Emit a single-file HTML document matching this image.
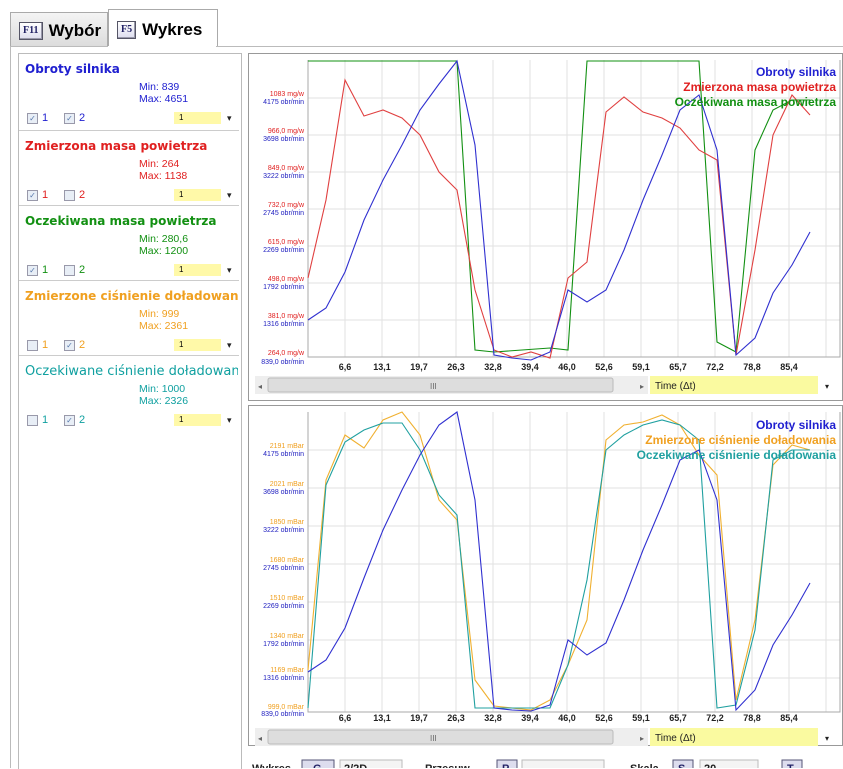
<!DOCTYPE html>
<html><head><meta charset="utf-8"><style>
body{margin:0;width:843px;height:768px;overflow:hidden;background:#fff;font-family:"Liberation Sans",Arial,sans-serif;position:relative}
.abs{position:absolute}
.tab{position:absolute;top:9px;height:36px;border:1px solid #aaa;border-bottom:none;background:linear-gradient(#f4f4f4,#dcdcdc);font-weight:bold;font-size:17px;white-space:nowrap;line-height:36px}
.key{display:inline-block;border:1px solid #556;background:linear-gradient(#fff,#dde);color:#226;font-size:10px;line-height:12px;font-family:"Liberation Serif",serif;padding:2px 3px;margin:0 6px 0 8px;vertical-align:middle;box-shadow:inset -1px -1px 0 #99a}
.item{position:absolute;left:19px;width:220px;border-bottom:1px solid #ccc;font-size:11px}
.item .t{position:absolute;left:6px;top:8px;font-weight:bold;font-size:12px;font-family:"DejaVu Sans",sans-serif;white-space:nowrap;overflow:hidden;width:213px}
.item .mm{position:absolute;left:120px;top:27px;line-height:12px;font-size:10.5px}
.cb{position:absolute;top:59px;width:9px;height:9px;border:1px solid #99a;background:#e8eef6;font-size:8px;line-height:9px;text-align:center;color:#57a}
.lab{position:absolute;top:58px;font-size:11px}
.sel{position:absolute;left:155px;top:58px;width:42px;height:12px;background:#fff9a8;font-size:8px;line-height:12px;padding-left:5px}
.sel:after{content:"▾";position:absolute;left:53px;top:0;color:#222;font-size:9px}
</style></head><body>
<div class="tab" style="left:10px;width:96px;top:12px;height:33px;line-height:33px"><span class="key">F11</span><span style="vertical-align:middle">Wybór</span></div>
<div class="tab" style="left:108px;width:108px;background:#fff;height:37px;line-height:37px"><span class="key">F5</span><span style="vertical-align:middle">Wykres</span></div>
<div class="abs" style="left:10px;top:46px;width:833px;height:1px;background:#bbb"></div>
<div class="abs" style="left:10px;top:46px;width:1px;height:722px;background:#bbb"></div>
<div class="abs" style="left:108px;top:46px;width:108px;height:1px;background:#fff"></div>
<div class="abs" style="left:18px;top:53px;width:222px;height:715px;border:1px solid #bbb;border-bottom:none"></div>

<div class="item" style="top:54px;height:76px;color:#2020d0"><div class="t">Obroty silnika</div><div class="mm">Min: 839<br>Max: 4651</div><div class="cb" style="left:8px">✓</div><div class="lab" style="left:23px">1</div><div class="cb" style="left:45px">✓</div><div class="lab" style="left:60px">2</div><div class="sel" style="color:#000">1</div></div>
<div class="item" style="top:131px;height:74px;color:#e02020"><div class="t">Zmierzona masa powietrza</div><div class="mm">Min: 264<br>Max: 1138</div><div class="cb" style="left:8px">✓</div><div class="lab" style="left:23px">1</div><div class="cb" style="left:45px"></div><div class="lab" style="left:60px">2</div><div class="sel" style="color:#000">1</div></div>
<div class="item" style="top:206px;height:74px;color:#129012"><div class="t">Oczekiwana masa powietrza</div><div class="mm">Min: 280,6<br>Max: 1200</div><div class="cb" style="left:8px">✓</div><div class="lab" style="left:23px">1</div><div class="cb" style="left:45px"></div><div class="lab" style="left:60px">2</div><div class="sel" style="color:#000">1</div></div>
<div class="item" style="top:281px;height:74px;color:#f0a020"><div class="t">Zmierzone ciśnienie doładowania</div><div class="mm">Min: 999<br>Max: 2361</div><div class="cb" style="left:8px"></div><div class="lab" style="left:23px">1</div><div class="cb" style="left:45px">✓</div><div class="lab" style="left:60px">2</div><div class="sel" style="color:#000">1</div></div>
<div class="item" style="top:356px;height:74px;color:#10a0a0;border-bottom:none"><div class="t" style="font-weight:normal;font-size:13px">Oczekiwane ciśnienie doładowania</div><div class="mm">Min: 1000<br>Max: 2326</div><div class="cb" style="left:8px"></div><div class="lab" style="left:23px">1</div><div class="cb" style="left:45px">✓</div><div class="lab" style="left:60px">2</div><div class="sel" style="color:#000">1</div></div>

<svg class="abs" style="left:0;top:0" width="843" height="768" font-family="Liberation Sans, Arial, sans-serif">
<g fill="none" stroke="#999"><rect x="248.5" y="53.5" width="594" height="347"/><rect x="248.5" y="405.5" width="594" height="340"/></g>
<g stroke="#e2e2e2">
<path d="M345 60V357M382 60V357M419 60V357M456 60V357M493 60V357M530 60V357M567 60V357M604 60V357M641 60V357M678 60V357M715 60V357M752 60V357M789 60V357M826 60V357M308 98H840M308 135H840M308 172H840M308 209H840M308 246H840M308 283H840M308 320H840"/>
<path d="M345 412V712M382 412V712M419 412V712M456 412V712M493 412V712M530 412V712M567 412V712M604 412V712M641 412V712M678 412V712M715 412V712M752 412V712M789 412V712M826 412V712M308 450H840M308 488H840M308 526H840M308 564H840M308 602H840M308 640H840M308 678H840"/>
</g>
<g fill="none" stroke="#aaa"><path d="M308 60V357H840V60M308 412V712H840V412"/></g>
<g font-size="7" text-anchor="end">
<g fill="#e02020"><text x="304" y="96">1083 mg/w</text><text x="304" y="133">966,0 mg/w</text><text x="304" y="170">849,0 mg/w</text><text x="304" y="207">732,0 mg/w</text><text x="304" y="244">615,0 mg/w</text><text x="304" y="281">498,0 mg/w</text><text x="304" y="318">381,0 mg/w</text><text x="304" y="355">264,0 mg/w</text></g>
<g fill="#2020c0"><text x="304" y="104">4175 obr/min</text><text x="304" y="141">3698 obr/min</text><text x="304" y="178">3222 obr/min</text><text x="304" y="215">2745 obr/min</text><text x="304" y="252">2269 obr/min</text><text x="304" y="289">1792 obr/min</text><text x="304" y="326">1316 obr/min</text><text x="304" y="364">839,0 obr/min</text></g>
<g fill="#f0a020"><text x="304" y="448">2191 mBar</text><text x="304" y="486">2021 mBar</text><text x="304" y="524">1850 mBar</text><text x="304" y="562">1680 mBar</text><text x="304" y="600">1510 mBar</text><text x="304" y="638">1340 mBar</text><text x="304" y="672">1169 mBar</text><text x="304" y="709">999,0 mBar</text></g>
<g fill="#2020c0"><text x="304" y="456">4175 obr/min</text><text x="304" y="494">3698 obr/min</text><text x="304" y="532">3222 obr/min</text><text x="304" y="570">2745 obr/min</text><text x="304" y="608">2269 obr/min</text><text x="304" y="646">1792 obr/min</text><text x="304" y="680">1316 obr/min</text><text x="304" y="716">839,0 obr/min</text></g>
</g>
<g font-size="9" font-weight="bold" fill="#222" text-anchor="middle">
<text x="345" y="370">6,6</text><text x="382" y="370">13,1</text><text x="419" y="370">19,7</text><text x="456" y="370">26,3</text><text x="493" y="370">32,8</text><text x="530" y="370">39,4</text><text x="567" y="370">46,0</text><text x="604" y="370">52,6</text><text x="641" y="370">59,1</text><text x="678" y="370">65,7</text><text x="715" y="370">72,2</text><text x="752" y="370">78,8</text><text x="789" y="370">85,4</text>
<text x="345" y="721">6,6</text><text x="382" y="721">13,1</text><text x="419" y="721">19,7</text><text x="456" y="721">26,3</text><text x="493" y="721">32,8</text><text x="530" y="721">39,4</text><text x="567" y="721">46,0</text><text x="604" y="721">52,6</text><text x="641" y="721">59,1</text><text x="678" y="721">65,7</text><text x="715" y="721">72,2</text><text x="752" y="721">78,8</text><text x="789" y="721">85,4</text>
</g>
<g fill="none" stroke-width="1.1">
<polyline stroke="#129012" points="308,61 457,61 475,350 494,352 550,348 568,350 587,61 699,61 717,342 736,352 755,150 773,110 792,100 810,100"/>
<polyline stroke="#e04040" points="308,278 326,200 345,80 364,116 383,110 402,118 420,135 439,172 457,190 475,290 494,350 512,357 531,352 550,358 568,278 587,262 606,112 624,97 643,112 662,118 680,128 699,150 717,160 736,355 755,250 773,135 792,95 810,115"/>
<polyline stroke="#3030d0" points="308,320 326,308 345,272 364,220 383,180 402,145 420,110 439,84 457,61 475,145 494,355 512,358 531,360 550,352 568,290 587,302 606,290 624,250 643,200 662,155 680,110 699,95 717,150 736,355 755,338 773,293 792,265 810,232"/>
<polyline stroke="#f0b030" points="308,670 326,480 345,435 364,448 383,420 402,412 420,435 439,500 457,520 475,680 494,706 531,710 550,700 568,665 587,620 606,440 624,425 643,422 662,415 680,425 699,455 717,475 736,700 755,620 773,465 792,445 810,450"/>
<polyline stroke="#20a0a0" points="308,708 326,485 345,442 364,430 383,423 402,423 420,450 439,495 457,515 475,708 550,708 568,665 587,580 606,450 624,435 643,425 662,420 680,425 699,440 717,708 736,705 755,630 773,460 792,450 810,450"/>
<polyline stroke="#3030d0" points="308,672 326,660 345,628 364,578 383,530 402,490 420,455 439,425 457,412 475,500 494,708 512,710 531,711 550,705 568,640 587,655 606,643 624,600 643,550 662,505 680,460 699,450 717,500 736,710 755,690 773,645 792,615 810,583"/>
</g>
<g font-size="12" font-weight="bold" text-anchor="end">
<text x="836" y="76" fill="#2020d0">Obroty silnika</text><text x="836" y="91" fill="#e02020">Zmierzona masa powietrza</text><text x="836" y="106" fill="#129012">Oczekiwana masa powietrza</text>
<text x="836" y="429" fill="#2020d0">Obroty silnika</text><text x="836" y="444" fill="#f0a020">Zmierzone ciśnienie doładowania</text><text x="836" y="459" fill="#20a0a0">Oczekiwane ciśnienie doładowania</text>
</g>
<g>
<rect x="255" y="376" width="393" height="18" fill="#eee"/><rect x="268" y="378" width="345" height="14" rx="2" fill="#ddd" stroke="#bbb"/><text x="258" y="389" font-size="8" fill="#666">◂</text><text x="640" y="389" font-size="8" fill="#666">▸</text><text x="430" y="389" font-size="8" fill="#666">III</text>
<rect x="650" y="376" width="168" height="18" fill="#fafaa0"/><text x="655" y="389" font-size="10" fill="#222">Time (Δt)</text><text x="825" y="389" font-size="8" fill="#222">▾</text>
<rect x="255" y="728" width="393" height="18" fill="#eee"/><rect x="268" y="730" width="345" height="14" rx="2" fill="#ddd" stroke="#bbb"/><text x="258" y="741" font-size="8" fill="#666">◂</text><text x="640" y="741" font-size="8" fill="#666">▸</text><text x="430" y="741" font-size="8" fill="#666">III</text>
<rect x="650" y="728" width="168" height="18" fill="#fafaa0"/><text x="655" y="741" font-size="10" fill="#222">Time (Δt)</text><text x="825" y="741" font-size="8" fill="#222">▾</text>
</g>
<g font-size="11" font-weight="bold" fill="#222">
<text x="252" y="772">Wykres</text>
<rect x="302" y="760" width="32" height="12" fill="#dde" stroke="#557"/><text x="313" y="772" fill="#226">G</text>
<rect x="340" y="760" width="62" height="12" fill="#f4f4f4" stroke="#bbb"/><text x="344" y="772">2/2D</text>
<text x="425" y="772">Przesuw</text>
<rect x="497" y="760" width="20" height="12" fill="#dde" stroke="#557"/><text x="502" y="772" fill="#226">P</text>
<rect x="522" y="760" width="82" height="12" fill="#f4f4f4" stroke="#bbb"/>
<text x="630" y="772">Skala</text>
<rect x="673" y="760" width="20" height="12" fill="#dde" stroke="#557"/><text x="678" y="772" fill="#226">S</text>
<rect x="700" y="760" width="58" height="12" fill="#f4f4f4" stroke="#bbb"/><text x="704" y="772">20</text>
<rect x="782" y="760" width="20" height="12" fill="#dde" stroke="#557"/><text x="787" y="772" fill="#226">T</text>
</g>
</svg>
</body></html>
